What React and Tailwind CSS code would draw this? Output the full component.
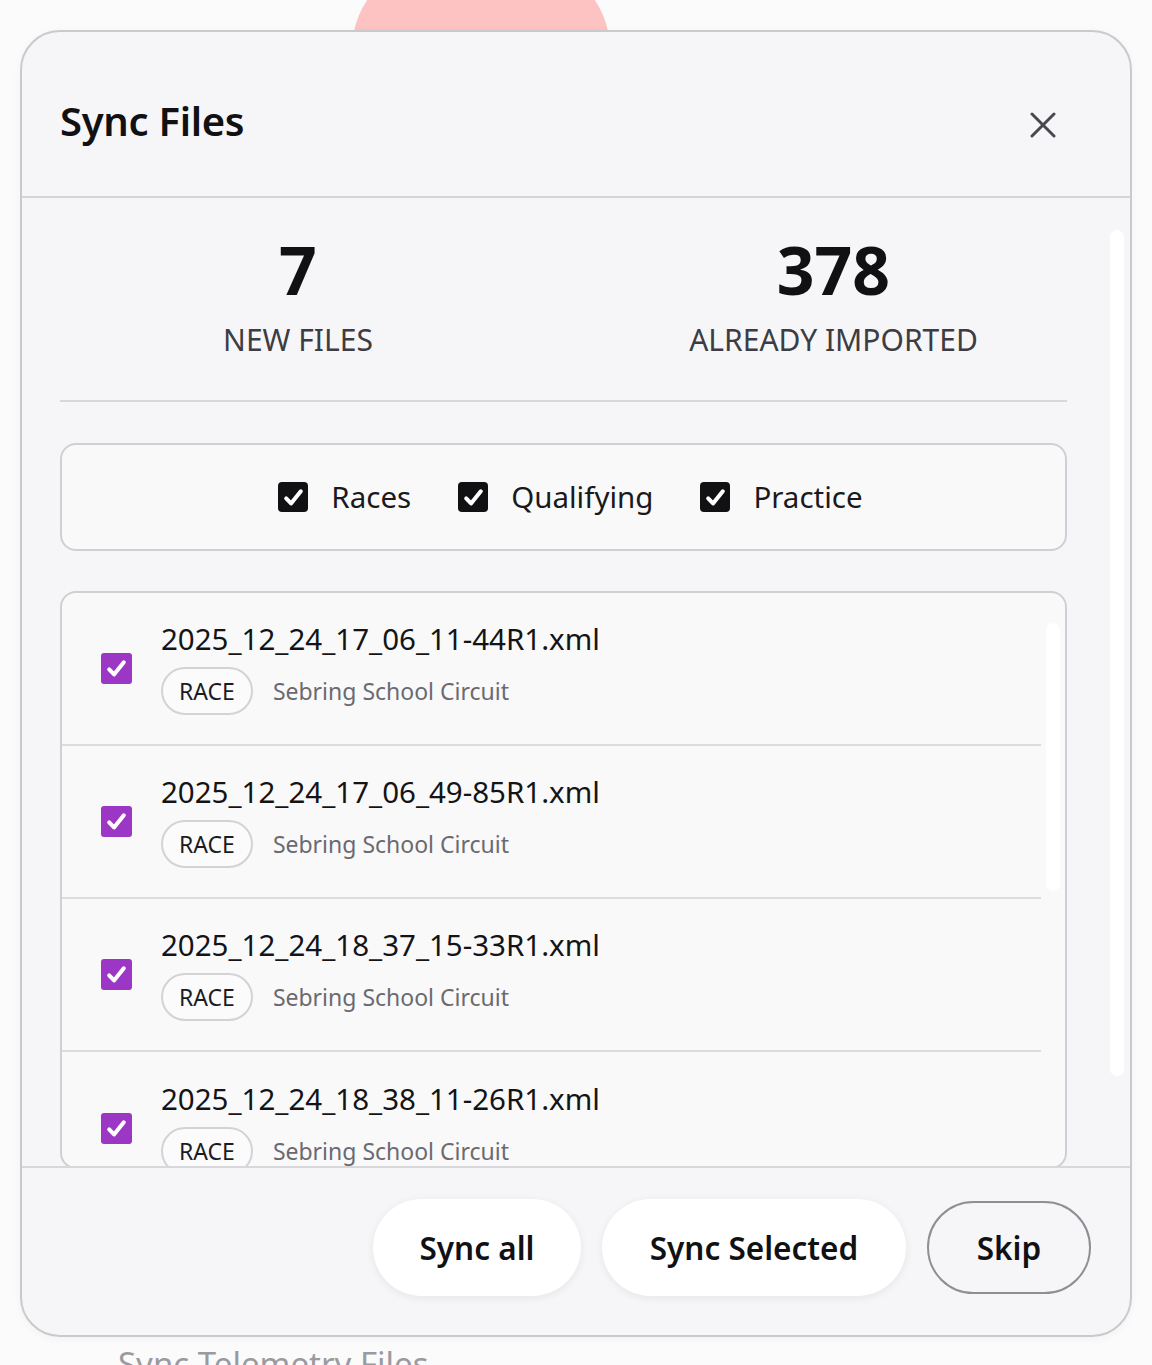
import React from "react";

const FILES = [
  "2025_12_24_17_06_11-44R1.xml",
  "2025_12_24_17_06_49-85R1.xml",
  "2025_12_24_18_37_15-33R1.xml",
  "2025_12_24_18_38_11-26R1.xml",
];

const FILTERS = ["Races", "Qualifying", "Practice"];

function CheckMark({ className }) {
  return (
    <svg viewBox="0 0 24 24" className={className} fill="none" stroke="currentColor" strokeWidth="3.6" strokeLinecap="round" strokeLinejoin="round">
      <path d="M5.5 12.8l4.3 4.5L18.5 6.5" />
    </svg>
  );
}

function Box({ tone }) {
  // tone: "dark" for the filter row, "purple" for files
  const cls =
    tone === "dark"
      ? "w-[30px] h-[30px] bg-[#111113] rounded-[4px]"
      : "w-[31px] h-[31px] bg-[#9c36c4] rounded-[3px]";
  return (
    <div className={`shrink-0 flex items-center justify-center text-white ${cls}`}>
      <CheckMark className="w-[27px] h-[27px]" />
    </div>
  );
}

function FileRow({ name, last }) {
  return (
    <div className={`flex items-center gap-[29px] pl-[39px] h-[153px] ${last ? "" : "border-b-2 border-[#dcdce0]"}`}>
      <Box tone="purple" />
      <div className="flex flex-col -mt-[2px]">
        <div className="text-[29.5px] leading-[38px] text-[#141416]">{name}</div>
        <div className="flex items-center gap-[20px] mt-[9px]">
          <span className="h-[48px] px-[16px] flex items-center rounded-full border-2 border-[#d3d3d7] bg-[#fbfbfc] text-[23px] text-[#1c1c1e]">
            RACE
          </span>
          <span className="text-[23px] text-[#6a6a70]">Sebring School Circuit</span>
        </div>
      </div>
    </div>
  );
}

export default function App() {
  return (
    <div className="relative h-[1365px] overflow-hidden bg-[#fbfbfc] pt-[30px] font-['Noto_Sans',sans-serif]">
      {/* pinkish shape behind the dialog */}
      <div className="absolute left-[352px] top-[-40px] w-[258px] h-[220px] rounded-[90px] bg-[#fdc3c3]" />

      <div className="relative mx-[20px] h-[1307px] rounded-[40px] border-2 border-[#c9c9ce] bg-[#f6f6f8] flex flex-col overflow-hidden shadow-[0_2px_10px_rgba(0,0,0,0.04)]">
        {/* Header */}
        <div className="h-[166px] shrink-0 flex items-center justify-between pl-[38px] pr-[74px] pt-[14px] border-b-2 border-[#d4d4d8]">
          <h2 className="text-[40px] font-semibold text-[#111113] tracking-[-0.3px]">Sync Files</h2>
          <svg viewBox="0 0 26 26" className="w-[26px] h-[26px] mt-[8px] text-[#48484e]" fill="none" stroke="currentColor" strokeWidth="3" strokeLinecap="round">
            <path d="M2 2l22 22M24 2L2 24" />
          </svg>
        </div>

        {/* Body */}
        <div className="relative flex-1 overflow-hidden pl-[38px] pr-[63px]">
          <div className="grid grid-cols-[476px_1fr] h-[204px] border-b-2 border-[#d8d8dc] pt-[30px]">
            <div className="flex flex-col items-center">
              <div className="text-[66px] leading-[82px] font-bold text-[#111113]">7</div>
              <div className="text-[30px] leading-[36px] text-[#3c3c42] mt-[12px]">NEW FILES</div>
            </div>
            <div className="flex flex-col items-center pl-[64px]">
              <div className="text-[66px] leading-[82px] font-bold text-[#111113]">378</div>
              <div className="text-[30px] leading-[36px] text-[#3c3c42] mt-[12px]">ALREADY IMPORTED</div>
            </div>
          </div>

          <div className="mt-[41px] h-[108px] rounded-[16px] border-2 border-[#d0d0d4] bg-[#f9f9fa] flex items-center justify-center gap-[47px] pl-[14px]">
            {FILTERS.map((f) => (
              <label key={f} className="flex items-center gap-[23px]">
                <Box tone="dark" />
                <span className="text-[29.5px] text-[#1a1a1c]">{f}</span>
              </label>
            ))}
          </div>

          <div className="relative mt-[40px] h-[578px] rounded-[16px] border-2 border-[#d0d0d4] bg-[#f9f9fa] overflow-hidden">
            <div className="w-[979px]">
              {FILES.map((name, i) => (
                <FileRow key={name} name={name} last={i === FILES.length - 1} />
              ))}
            </div>
            {/* list scrollbar */}
            <div className="absolute right-[5px] top-[30px] w-[14px] h-[268px] rounded-full bg-white" />
          </div>

          {/* dialog scrollbar */}
          <div className="absolute right-[6px] top-[32px] w-[14px] h-[846px] rounded-full bg-white" />
        </div>

        {/* Footer */}
        <div className="h-[169px] shrink-0 border-t-2 border-[#d8d8dc] flex items-center justify-end gap-[21px] pr-[39px] pb-[8px]">
          <button className="h-[97px] w-[208px] rounded-full bg-white shadow-[0_2px_8px_rgba(0,0,0,0.07)] text-[31.5px] font-semibold text-[#111113]">
            Sync all
          </button>
          <button className="h-[97px] w-[304px] rounded-full bg-white shadow-[0_2px_8px_rgba(0,0,0,0.07)] text-[31.5px] font-semibold text-[#111113]">
            Sync Selected
          </button>
          <button className="h-[93px] w-[164px] rounded-full border-2 border-[#8e8e94] text-[31.5px] font-semibold text-[#111113]">
            Skip
          </button>
        </div>
      </div>

      <div className="pl-[118px] mt-[7px] text-[33px] leading-[40px] text-[#9a9aa0]">Sync Telemetry Files</div>
    </div>
  );
}
